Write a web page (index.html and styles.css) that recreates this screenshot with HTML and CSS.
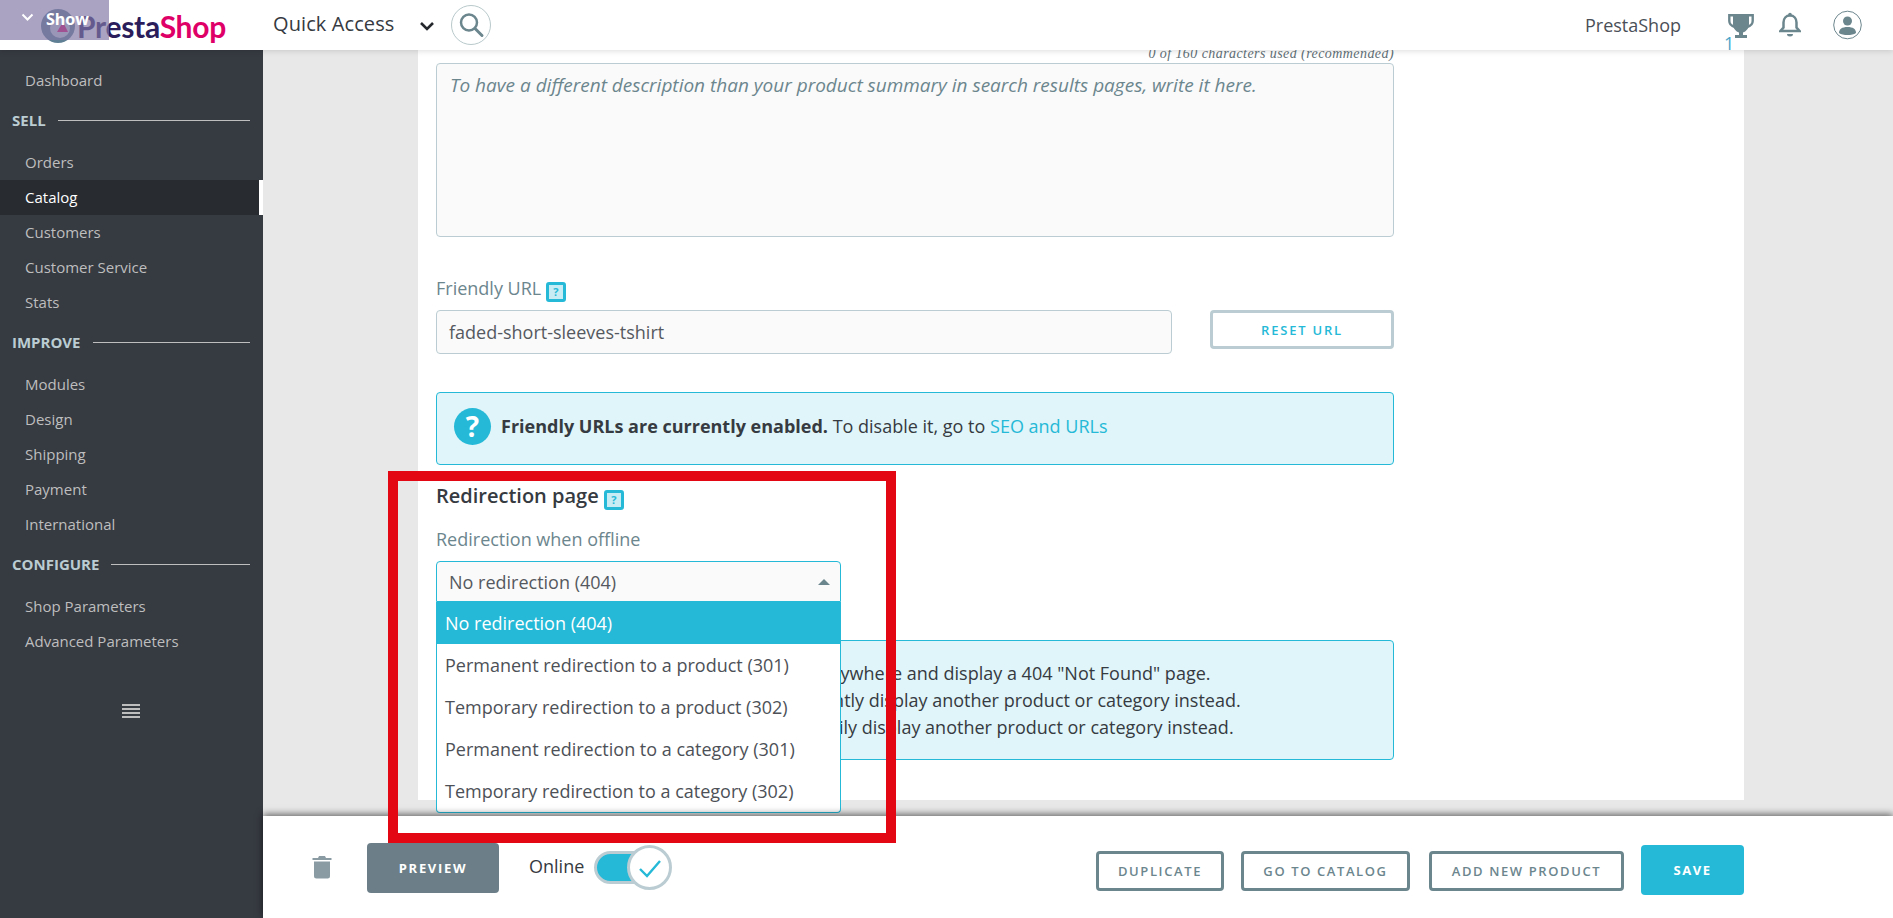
FILE: index.html
```html
<!DOCTYPE html>
<html lang="en">
<head>
<meta charset="utf-8">
<title>PrestaShop product SEO</title>
<link rel="stylesheet" href="styles.css">
</head>
<body>
<header class="topbar">
  <div class="logo">
    <svg class="logo-mark" width="36" height="36" viewBox="0 0 36 36"><circle cx="18" cy="18" r="17" fill="#5f7f94"/><circle cx="20" cy="20" r="10" fill="#c9d6df"/><path d="M17 24l6-10 5 10z" fill="#df0067"/></svg>
    <span class="logo-text"><span class="logo-a">Presta</span><span class="logo-b">Shop</span></span>
  </div>
  <span class="quick">Quick Access</span>
  <svg class="quick-chev" width="16" height="10" viewBox="0 0 16 10"><path d="M2 2l6 6 6-6" fill="none" stroke="#25282c" stroke-width="2.6"/></svg>
  <span class="search"><svg width="28" height="28" viewBox="0 0 28 28"><circle cx="12" cy="11.500" r="8" fill="none" stroke="#6c868e" stroke-width="2.500"/><path d="M18 17.500l7 7" stroke="#6c868e" stroke-width="3" stroke-linecap="round"/></svg></span>
  <span class="shop">PrestaShop</span>
  <span class="trophy"><svg width="26" height="26" viewBox="0 0 26 26"><path d="M5 1h16v10c0 4.500-3 7.500-6 8.500V22h4v3H7v-3h4v-2.500c-3-1-6-4-6-8.500z" fill="#6c868e"/><path d="M6 2.300H1.300V8c0 3 2 5 5.700 6M20 2.300h4.700V8c0 3-2 5-5.700 6" fill="none" stroke="#6c868e" stroke-width="2.400"/></svg><span class="trophy-n">1</span></span>
  <svg class="bell" width="22" height="25" viewBox="0 0 22 25"><path d="M11 3.500c4 0 6.500 3 6.500 7v5l3 3.500H1.500l3-3.500v-5c0-4 2.500-7 6.500-7z" fill="none" stroke="#6c868e" stroke-width="2.500"/><circle cx="11" cy="2.500" r="1.800" fill="#6c868e"/><path d="M8 22h6a3 2.500 0 0 1-6 0z" fill="#6c868e"/></svg>
  <svg class="user" width="29" height="30" viewBox="0 0 29 30"><circle cx="14.500" cy="15" r="13.800" fill="none" stroke="#6c868e" stroke-width="1"/><circle cx="14.500" cy="11" r="4.500" fill="#6c868e"/><path d="M6 23c0-4 3-6 8.500-6s8.500 2 8.500 6c-2 1.500-5 2-8.500 2s-6.500-.5-8.500-2z" fill="#6c868e"/></svg>
</header>
<button class="show-tab"><svg width="13" height="8" viewBox="0 0 13 8"><path d="M1.500 1.500l5 5 5-5" fill="none" stroke="#fff" stroke-width="2"/></svg><span>Show</span></button>

<div class="layout">
  <nav class="sidebar">
    <a class="item">Dashboard</a>
    <div class="head"><span>SELL</span><i></i></div>
    <a class="item">Orders</a>
    <a class="item active">Catalog</a>
    <a class="item">Customers</a>
    <a class="item">Customer Service</a>
    <a class="item">Stats</a>
    <div class="head"><span>IMPROVE</span><i></i></div>
    <a class="item">Modules</a>
    <a class="item">Design</a>
    <a class="item">Shipping</a>
    <a class="item">Payment</a>
    <a class="item">International</a>
    <div class="head"><span>CONFIGURE</span><i></i></div>
    <a class="item">Shop Parameters</a>
    <a class="item">Advanced Parameters</a>
    <div class="burger"><i></i><i></i><i></i><i></i></div>
  </nav>

  <main class="main">
    <div class="scroll">
      <section class="card">
        <div class="counter">0 of 160 characters used (recommended)</div>
        <div class="textarea">To have a different description than your product summary in search results pages, write it here.</div>

        <label class="label friendly">Friendly URL <span class="help">?</span></label>
        <div class="url-row">
          <div class="input">faded-short-sleeves-tshirt</div>
          <button class="reset">RESET URL</button>
        </div>

        <div class="alert alert-one">
          <span class="alert-icon">?</span>
          <p><b>Friendly URLs are currently enabled.</b> To disable it, go to <a>SEO and URLs</a></p>
        </div>

        <h2 class="title">Redirection page <span class="help">?</span></h2>
        <label class="label offline">Redirection when offline</label>
        <div class="select">
          <span>No redirection (404)</span><i class="caret"></i>
          <ul class="menu">
            <li class="sel">No redirection (404)</li>
            <li>Permanent redirection to a product (301)</li>
            <li>Temporary redirection to a product (302)</li>
            <li>Permanent redirection to a category (301)</li>
            <li>Temporary redirection to a category (302)</li>
          </ul>
        </div>

        <div class="alert alert-two">
          <span class="alert-icon">?</span>
          <p>No redirection (404) = Do not redirect anywhere and display a 404 "Not Found" page.<br>Permanent redirection (301) = Permanently display another product or category instead.<br>Temporary redirection (302) = Temporarily display another product or category instead.</p>
        </div>
      </section>
    </div>

    <footer class="footer">
      <svg class="trash" width="20" height="24" viewBox="0 0 20 24"><path d="M7 1h6l1 2h5.500v2H.5V3H6z" fill="#8a9ba3"/><path d="M2 6.500h16V21a2.500 2.500 0 0 1-2.500 2.500h-11A2.500 2.500 0 0 1 2 21z" fill="#8a9ba3"/></svg>
      <button class="btn-preview">PREVIEW</button>
      <span class="online">Online</span>
      <span class="toggle"><span class="knob"><svg width="24" height="20" viewBox="0 0 24 20"><path d="M2 11l7 7L22 3" fill="none" stroke="#25b9d7" stroke-width="2.400"/></svg></span></span>
      <div class="actions">
        <button class="btn-out dup">DUPLICATE</button>
        <button class="btn-out cat">GO TO CATALOG</button>
        <button class="btn-out add">ADD NEW PRODUCT</button>
        <button class="btn-save">SAVE</button>
      </div>
    </footer>
  </main>
</div>
<div class="redbox"></div>
</body>
</html>
```
FILE: styles.css
```css
* { box-sizing: border-box; }
html, body { margin: 0; padding: 0; }
body {
  position: relative;
  width: 1893px;
  height: 918px;
  overflow: hidden;
  font-family: "Open Sans", "Liberation Sans", sans-serif;
  color: #363a41;
  background: #fff;
}
button { font-family: inherit; cursor: pointer; }

/* top bar */
.topbar {
  position: relative;
  z-index: 5;
  display: flex;
  align-items: center;
  height: 50px;
  background: #fff;
  box-shadow: 0 1px 6px rgba(0, 0, 0, .14);
}
.logo { display: flex; align-items: center; width: 273px; padding-left: 40px; }
.logo-mark { flex: none; margin-right: 1px; margin-top: 2px; }
.logo-text { font-family: Lato, "Open Sans", sans-serif; font-weight: 700; font-size: 30px; letter-spacing: -.3px; margin-top: 1px; }
.logo-a { color: #2b1d5c; }
.logo-b { color: #df0067; }
.quick { font-size: 20px; color: #363a41; letter-spacing: .1px; margin-top: -4px; }
.quick-chev { margin-left: 25px; margin-top: 1px; }
.search {
  display: flex;
  align-items: center;
  justify-content: center;
  width: 40px;
  height: 40px;
  margin-left: 16px;
  border: 1px solid #b9c9cb;
  border-radius: 50%;
}
.shop { font-size: 18px; color: #4a4f57; margin-left: auto; }
.trophy { position: relative; display: block; width: 26px; height: 26px; margin-left: 47px; margin-top: 2px; }
.trophy svg { display: block; }
.trophy-n { position: absolute; left: -4px; top: 19px; font-size: 18px; line-height: 22px; color: #4aa6c9; }
.bell { margin-left: 25px; margin-top: -2px; }
.user { margin-left: 32px; margin-right: 31px; margin-top: -1px; }

.show-tab {
  position: absolute;
  left: 0;
  top: 0;
  z-index: 6;
  display: flex;
  align-items: center;
  gap: 15px;
  width: 109px;
  height: 40px;
  padding: 0 0 0 21px;
  border: 0;
  background: rgba(130, 120, 165, .68);
  color: #fff;
  font-size: 16px;
  font-weight: 700;
}
.show-tab svg { flex: none; margin-top: -6px; }
.show-tab span { margin-top: -2px; margin-left: -3px; }

/* layout */
.layout { display: flex; height: 868px; }

/* sidebar */
.sidebar {
  flex: none;
  width: 263px;
  padding-top: 13px;
  background: #363a41;
}
.item {
  display: block;
  height: 35px;
  padding-left: 25px;
  font-size: 15px;
  line-height: 34px;
  color: #bebebe;
}
.item.active {
  background: #282b30;
  border-right: 4px solid #fff;
  color: #fff;
}
.head {
  display: flex;
  align-items: center;
  gap: 12px;
  height: 47px;
  padding: 0 13px 0 12px;
  font-size: 15px;
  font-weight: 700;
  color: #bbcdd2;
}
.head span { margin-top: -3px; }
.head i { flex: 1; height: 1px; background: #bebebe; margin-top: -2px; }
.burger { display: flex; flex-direction: column; gap: 2px; width: 18px; margin: 45px 0 0 122px; }
.burger i { display: block; height: 2px; background: #bebebe; }

/* main */
.main { flex: 1; display: flex; flex-direction: column; min-width: 0; background: #e8e8e8; }
.scroll { flex: 1; min-height: 0; padding: 0 149px 0 155px; overflow: hidden; }
.card {
  display: flow-root;
  height: 750px;
  padding: 0 350px 0 18px;
  background: #fff;
}
.counter {
  height: 19px;
  margin-top: -6px;
  font-family: "Liberation Serif", serif;
  font-style: italic;
  font-size: 14px;
  line-height: 19px;
  text-align: right;
  color: #5f6f76;
  letter-spacing: .43px;
  white-space: nowrap;
}
.textarea {
  height: 174px;
  padding: 9px 13px;
  border: 1px solid #bbcdd2;
  border-radius: 4px;
  background: #fafafa;
  font-size: 19px;
  line-height: 24px;
  font-style: italic;
  color: #6c868e;
}
.label { display: block; height: 24px; font-size: 18px; line-height: 24px; color: #6c868e; }
.friendly { margin-top: 39px; }
.help {
  display: inline-block;
  width: 20px;
  height: 20px;
  border: 3px solid #25b9d7;
  border-radius: 3px;
  background: #c7ecf4;
  color: #25b9d7;
  font-size: 11px;
  font-weight: 700;
  line-height: 14px;
  text-align: center;
  vertical-align: -1px;
}
.url-row { display: flex; align-items: flex-start; justify-content: space-between; margin-top: 10px; }
.input {
  width: 736px;
  height: 44px;
  padding: 0 12px;
  border: 1px solid #bbcdd2;
  border-radius: 4px;
  background: #fafafa;
  font-size: 18px;
  line-height: 42px;
  color: #55595f;
}
.reset {
  width: 184px;
  height: 39px;
  padding: 0;
  border: 3px solid #bbcdd2;
  border-radius: 4px;
  background: #fff;
  color: #25b9d7;
  font-size: 13px;
  font-weight: 600;
  letter-spacing: 1.800px;
}
.alert {
  display: flex;
  align-items: center;
  gap: 10px;
  padding-left: 17px;
  border: 1px solid #25b9d7;
  border-radius: 4px;
  background: #dff5f9;
  font-size: 18px;
  color: #363a41;
}
.alert p { margin: 0; }
.alert-one { height: 73px; margin-top: 38px; padding-bottom: 5px; }
.alert-one a { color: #25b9d7; }
.alert-icon {
  flex: none;
  width: 37px;
  height: 37px;
  border-radius: 50%;
  background: #25b9d7;
  color: #fff;
  font-size: 28px;
  font-weight: 700;
  line-height: 37px;
  text-align: center;
}
.title { height: 24px; margin: 19px 0 0; font-size: 20px; font-weight: 600; line-height: 24px; color: #363a41; }
.offline { margin-top: 19px; }
.select {
  position: relative;
  width: 405px;
  height: 41px;
  margin-top: 10px;
  padding-left: 12px;
  border: 1px solid #25b9d7;
  border-radius: 4px 4px 0 0;
  background: #fafafa;
  font-size: 18px;
  line-height: 41px;
  color: #55595f;
}
.caret {
  position: absolute;
  right: 10px;
  top: 17px;
  border: 6px solid transparent;
  border-top: 0;
  border-bottom-color: #6c868e;
}
.menu {
  position: absolute;
  left: -1px;
  top: 40px;
  z-index: 2;
  width: 405px;
  margin: 0;
  padding: 0;
  list-style: none;
  border: 1px solid #25b9d7;
  border-top: 0;
  border-radius: 0 0 4px 4px;
  background: #fff;
}
.menu li { height: 42px; padding-left: 8px; font-size: 18px; line-height: 42px; color: #4d5157; white-space: nowrap; }
.menu li.sel { background: #25b9d7; color: #fff; }
.alert-two { height: 120px; margin-top: 38px; line-height: 27px; }

/* footer */
.footer {
  position: relative;
  z-index: 3;
  flex: none;
  display: flex;
  align-items: flex-start;
  height: 102px;
  background: #fff;
  box-shadow: 0 -2px 7px rgba(0, 0, 0, .55);
}
.trash { margin: 39px 0 0 49px; }
.btn-preview {
  width: 132px;
  height: 50px;
  margin: 27px 0 0 35px;
  padding: 0;
  border: 0;
  border-radius: 4px;
  background: #6c7f88;
  color: #fff;
  font-size: 13px;
  font-weight: 700;
  letter-spacing: 1.700px;
}
.online { margin: 38px 0 0 30px; font-size: 18px; line-height: 24px; color: #363a41; }
.toggle {
  position: relative;
  width: 72px;
  height: 33px;
  margin: 35px 0 0 10px;
  border: 3px solid #bbcdd2;
  border-radius: 17px;
  background: #25b9d7;
}
.knob {
  position: absolute;
  right: -9px;
  top: -9px;
  display: flex;
  align-items: center;
  justify-content: center;
  width: 45px;
  height: 45px;
  border: 3px solid #bbcdd2;
  border-radius: 50%;
  background: #fff;
}
.actions { display: flex; align-items: flex-start; gap: 17px; margin: 29px 149px 0 auto; }
.btn-out {
  height: 40px;
  margin-top: 6px;
  padding: 0;
  border: 3px solid #6c868e;
  border-radius: 4px;
  background: #fff;
  color: #6c868e;
  font-size: 13px;
  font-weight: 600;
  letter-spacing: 1.600px;
}
.dup { width: 128px; margin-left: -1px; }
.cat { width: 169px; margin-right: 2px; }
.add { width: 195px; }
.btn-save {
  width: 103px;
  height: 50px;
  padding: 0;
  border: 0;
  border-radius: 4px;
  background: #25b9d7;
  color: #fff;
  font-size: 13px;
  font-weight: 700;
  letter-spacing: 1.500px;
}

/* annotation overlay */
.redbox {
  position: absolute;
  left: 388px;
  top: 471px;
  z-index: 10;
  width: 508px;
  height: 372px;
  border: 10px solid #e30613;
  pointer-events: none;
}
```
